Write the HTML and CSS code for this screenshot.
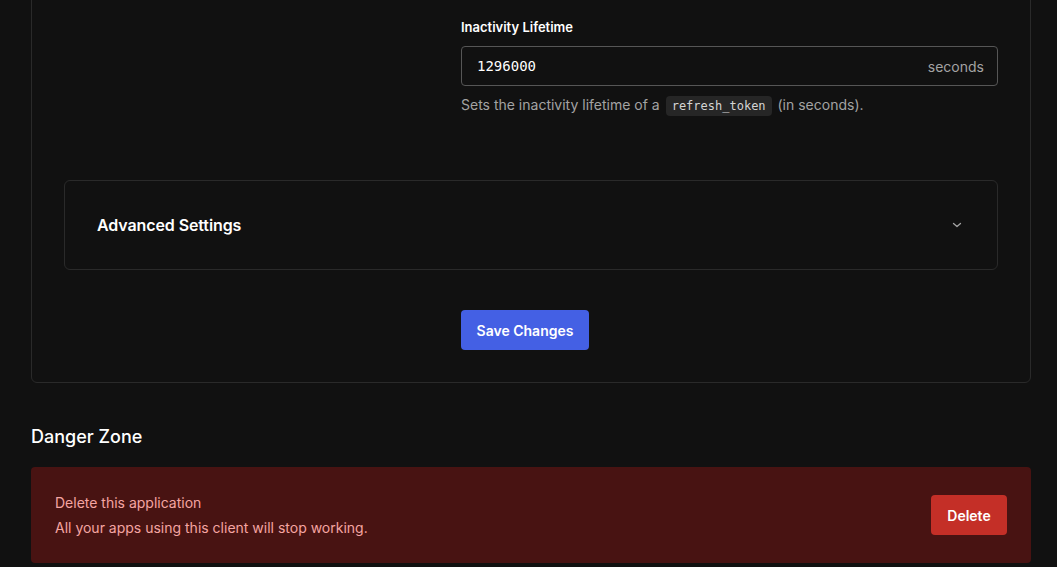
FILE: index.html
```html
<!DOCTYPE html>
<html lang="en">
<head>
<meta charset="utf-8">
<title>Application settings</title>
<link rel="stylesheet" href="styles.css">
</head>
<body>
<main class="page">
  <section class="card">
    <div class="form-grid">
      <div class="side"></div>
      <div class="field">
        <label class="field-label" for="inactivity">Inactivity Lifetime</label>
        <div class="input-wrap">
          <input id="inactivity" class="input" type="text" value="1296000">
          <span class="suffix">seconds</span>
        </div>
        <p class="help">Sets the inactivity lifetime of a <code class="chip">refresh_token</code> (in seconds).</p>
      </div>
    </div>

    <div class="advanced">
      <span class="advanced-title">Advanced Settings</span>
      <svg class="chevron" width="12" height="12" viewBox="0 0 12 12" aria-hidden="true">
        <path d="M2.5 4.5 L6 7.5 L9.5 4.5" fill="none" stroke="#a3a3a3" stroke-width="1.3" stroke-linecap="round" stroke-linejoin="round"/>
      </svg>
    </div>

    <div class="form-grid actions">
      <div class="side"></div>
      <div><button class="btn btn-primary" type="button">Save Changes</button></div>
    </div>
  </section>

  <h2 class="danger-title">Danger Zone</h2>
  <section class="danger">
    <div class="danger-text">
      <p class="danger-line">Delete this application</p>
      <p class="danger-line">All your apps using this client will stop working.</p>
    </div>
    <button class="btn btn-danger" type="button">Delete</button>
  </section>
</main>
</body>
</html>
```

FILE: styles.css
```css
* { box-sizing: border-box; }

html, body {
  margin: 0;
  padding: 0;
  background: #111111;
  color: #ffffff;
  font-family: Inter, "Noto Sans", "Liberation Sans", sans-serif;
}

.page {
  padding: 0 26px 0 31px;
}

.card {
  margin-top: -22px;
  border: 1px solid #2a2a2a;
  border-radius: 6px;
  padding: 32px 32px 32px 32px;
}

.form-grid {
  display: grid;
  grid-template-columns: 397px 1fr;
}

.field {
  display: flex;
  flex-direction: column;
  padding-top: 6px;
}

.field-label {
  font-size: 13px;
  font-weight: 600;
  line-height: 20px;
  color: #ffffff;
  margin-bottom: 9px;
}

.input-wrap {
  display: flex;
  align-items: center;
  height: 40px;
  border: 1px solid #565656;
  border-radius: 4px;
  padding: 0 13px 0 15px;
}

.input {
  flex: 1;
  min-width: 0;
  background: transparent;
  border: none;
  outline: none;
  color: #ffffff;
  font-family: "DejaVu Sans Mono", "Liberation Mono", monospace;
  font-size: 14px;
  padding: 0;
}

.suffix {
  font-size: 14px;
  color: #a3a3a3;
}

.help {
  margin: 9px 0 0;
  font-size: 14px;
  line-height: 20px;
  color: #a3a3a3;
}

.chip {
  display: inline-block;
  font-family: "DejaVu Sans Mono", "Liberation Mono", monospace;
  font-size: 12px;
  line-height: 20px;
  color: #d4d4d4;
  background: #262626;
  border-radius: 4px;
  padding: 0 6px;
  margin: 0 2px;
}

.advanced {
  margin-top: 64px;
  height: 90px;
  border: 1px solid #2a2a2a;
  border-radius: 6px;
  padding: 0 34px 0 32px;
  display: flex;
  align-items: center;
  justify-content: space-between;
}

.advanced-title {
  font-size: 16px;
  font-weight: 600;
  letter-spacing: -0.1px;
  color: #ffffff;
}

.chevron { display: block; }

.actions {
  margin-top: 40px;
}

.btn {
  font-family: Inter, "Noto Sans", "Liberation Sans", sans-serif;
  font-size: 14px;
  font-weight: 600;
  color: #ffffff;
  border: none;
  border-radius: 4px;
  height: 40px;
  padding: 0 16px;
  white-space: nowrap;
  cursor: pointer;
}

.btn-primary {
  background: #4460e4;
  width: 128px;
  padding: 0;
}

.danger-title {
  margin: 40px 0 16px;
  font-size: 18px;
  font-weight: 500;
  line-height: 28px;
  color: #ffffff;
}

.danger {
  height: 96px;
  background: #481312;
  border-radius: 4px;
  padding: 0 24px;
  display: flex;
  align-items: center;
  justify-content: space-between;
}

.danger-text {
  display: flex;
  flex-direction: column;
  gap: 5px;
}

.danger-line {
  margin: 0;
  font-size: 14px;
  line-height: 20px;
  color: #f5a5a2;
}

.btn-danger {
  background: #c42f27;
  width: 76px;
  padding: 0;
}
```
